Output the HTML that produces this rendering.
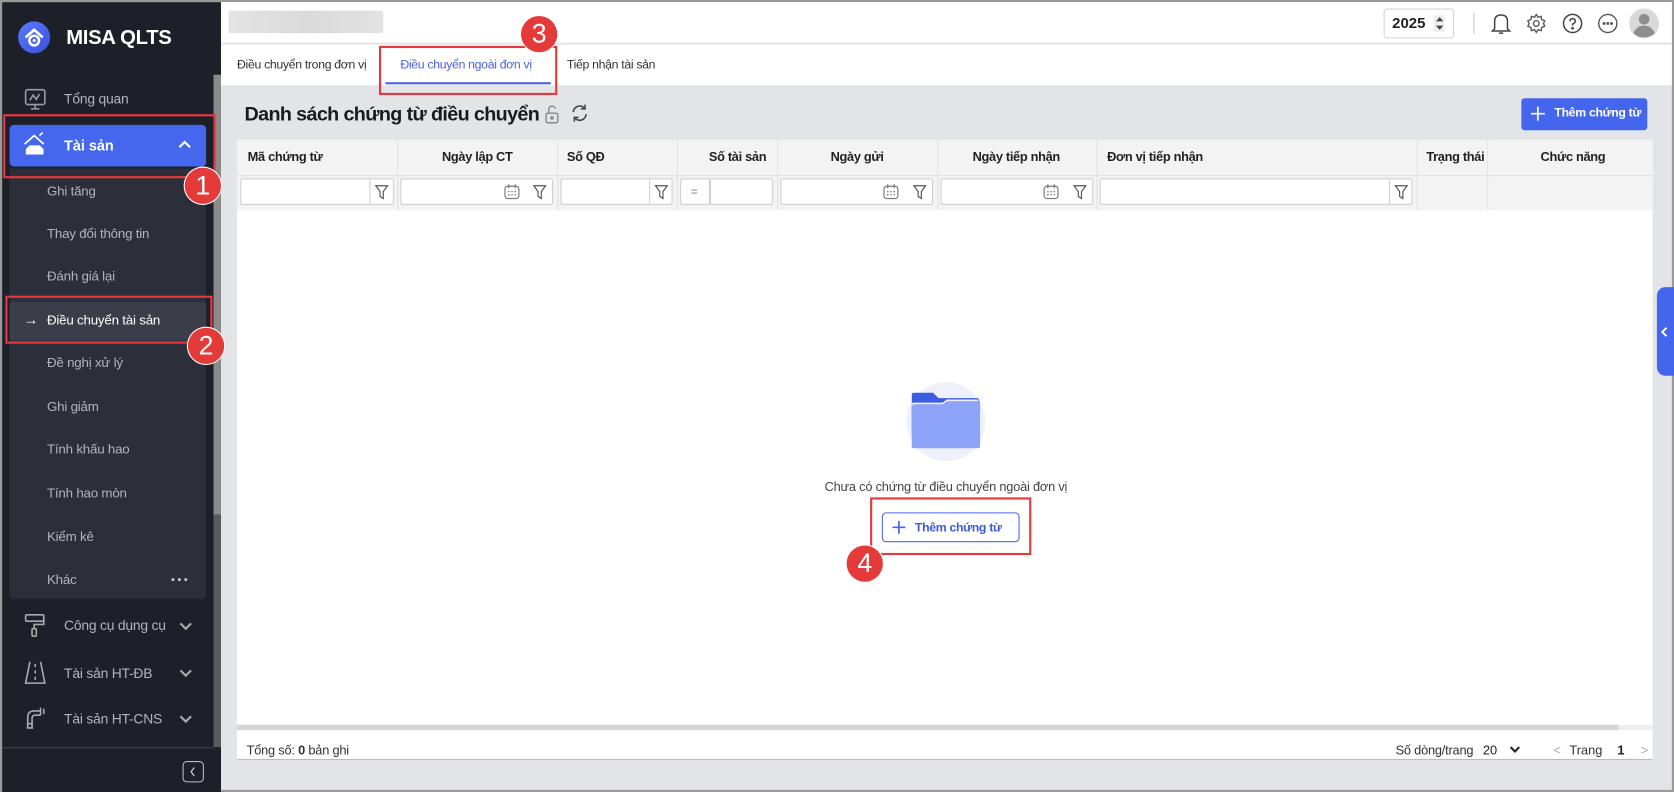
<!DOCTYPE html>
<html><head><meta charset="utf-8"><style>
html,body{margin:0;padding:0;width:1674px;height:792px;overflow:hidden;background:#9a9a9a;}
#w{position:absolute;left:0;top:0;width:1568px;height:742px;transform:scale(1.0676,1.0674);transform-origin:0 0;font-family:"Liberation Sans",Arial,sans-serif;background:#e3e4e8;overflow:hidden;}
.a{position:absolute;white-space:nowrap;}
.sb{left:2px;top:2px;width:205px;height:740px;background:#1e2029;}
.mi{position:absolute;left:60px;color:#b3b4bb;font-size:13px;letter-spacing:-0.2px;}
.si{position:absolute;left:44px;color:#b3b4bb;font-size:12.5px;letter-spacing:-0.2px;}
.red{position:absolute;border:2px solid #e8383d;box-sizing:border-box;}
.num{position:absolute;width:34px;height:34px;border-radius:50%;background:#e53a3a;color:#fff;font-size:25px;text-align:center;line-height:34px;box-shadow:0 0 0 1px #fff;}
.th{position:absolute;top:131px;height:33px;line-height:33px;font-size:12px;font-weight:bold;color:#222;letter-spacing:-0.3px;}
.inp{position:absolute;top:167px;height:25px;background:#fff;border:1px solid #d0d0d0;box-sizing:border-box;border-radius:2px;}
.vl{position:absolute;top:131px;width:1px;height:66px;background:#e2e2e2;}
.cal path{stroke-linecap:round}
</style></head><body><div id="w">
<div class="a" style="left:0;top:0;width:1568px;height:2px;background:#9a9a9a"></div>
<div class="a" style="left:1566px;top:0;width:2px;height:742px;background:#9a9a9a"></div>
<div class="a" style="left:0;top:740px;width:1568px;height:2px;background:#9a9a9a"></div>
<div class="a" style="left:0;top:0;width:2px;height:742px;background:#9a9a9a"></div>

<div class="a sb"></div>
<div class="a" style="left:200px;top:70px;width:7px;height:412px;background:#8a8a8a"></div>
<div class="a" style="left:200px;top:482px;width:7px;height:218px;background:#5a5b5f"></div>
<svg class="a" style="left:16px;top:19px" width="32" height="32" viewBox="0 0 32 32"><defs><linearGradient id="g" x1="0" y1="0" x2="1" y2="1"><stop offset="0" stop-color="#5b7cff"/><stop offset="1" stop-color="#3b4fd8"/></linearGradient></defs><circle cx="16" cy="16" r="15" fill="url(#g)"/><path d="M8 16 L16 9 L24 16" stroke="#fff" stroke-width="2.4" fill="none"/><circle cx="16" cy="19" r="4.5" stroke="#fff" stroke-width="2.4" fill="none"/><circle cx="16" cy="19" r="1.5" fill="#fff"/></svg>
<div class="a" style="left:62px;top:25px;color:#fff;font-size:19px;font-weight:bold;letter-spacing:-0.3px">MISA QLTS</div>

<svg class="a" style="left:22px;top:82px" width="22" height="22" viewBox="0 0 22 22" fill="none" stroke="#9a9ba3" stroke-width="1.5"><rect x="2" y="2" width="18" height="14" rx="2"/><path d="M6 12 L9 7 L12 11 L15 6 M11 16 V20 M7 20 H15"/></svg>
<div class="mi" style="top:85px">Tổng quan</div>

<div class="a" style="left:9px;top:117px;width:184px;height:39px;background:#4567ee;border-radius:4px"></div>
<svg class="a" style="left:21px;top:124px" width="24" height="24" viewBox="0 0 24 24" fill="none" stroke="#fff" stroke-width="1.6"><path d="M2 11 L11 3 L20 11 M16 3 L19 0"/><path d="M4 20 V16 L7 13 H16 L19 16 V20 Z" fill="#fff"/></svg>
<div class="a" style="left:60px;top:129px;color:#fff;font-size:13.5px;font-weight:bold">Tài sản</div>
<svg class="a" style="left:166px;top:130px" width="14" height="10" viewBox="0 0 14 10"><path d="M2 8 L7 3 L12 8" stroke="#fff" stroke-width="2" fill="none"/></svg>

<div class="a" style="left:9px;top:158px;width:184px;height:403px;background:#2c2e3a;border-radius:0 0 4px 4px"></div>
<div class="si" style="top:172px">Ghi tăng</div>
<div class="si" style="top:212px">Thay đổi thông tin</div>
<div class="si" style="top:252px">Đánh giá lại</div>
<div class="a" style="left:9px;top:283px;width:184px;height:36px;background:#3b3d49;border-radius:3px"></div>
<div class="a" style="left:22px;top:291px;color:#fff;font-size:14px">→</div>
<div class="si" style="top:293px;color:#fff">Điều chuyển tài sản</div>
<div class="si" style="top:333px">Đề nghị xử lý</div>
<div class="si" style="top:374px">Ghi giảm</div>
<div class="si" style="top:414px">Tính khấu hao</div>
<div class="si" style="top:455px">Tính hao mòn</div>
<div class="si" style="top:496px">Kiểm kê</div>
<div class="si" style="top:536px">Khác</div>
<svg class="a" style="left:160px;top:541px" width="16" height="4" viewBox="0 0 16 4"><circle cx="2" cy="2" r="1.4" fill="#ccc"/><circle cx="8" cy="2" r="1.4" fill="#ccc"/><circle cx="14" cy="2" r="1.4" fill="#ccc"/></svg>

<svg class="a" style="left:22px;top:574px" width="22" height="24" viewBox="0 0 22 24" fill="none" stroke="#aaa" stroke-width="1.5"><rect x="2" y="2" width="17" height="6" rx="1"/><path d="M19 5 V11 H10 V15"/><rect x="8" y="15" width="4" height="7" rx="1"/></svg>
<div class="mi" style="top:578px">Công cụ dụng cụ</div>
<svg class="a" style="left:22px;top:618px" width="22" height="24" viewBox="0 0 22 24" fill="none" stroke="#aaa" stroke-width="1.5"><path d="M6 2 L2 22 H20 L16 2 M11 4 V7 M11 10 V13 M11 16 V19"/></svg>
<div class="mi" style="top:623px">Tài sản HT-ĐB</div>
<svg class="a" style="left:22px;top:662px" width="22" height="24" viewBox="0 0 22 24" fill="none" stroke="#aaa" stroke-width="1.5"><path d="M4 20 V10 Q4 4 10 4 H16 M16 1 V8 M19 2 V7 M8 20 V11 Q8 8 11 8 H16 M3 16 H9 M3 20 H9"/></svg>
<div class="mi" style="top:666px">Tài sản HT-CNS</div>
<svg class="a" style="left:167px;top:582px" width="14" height="10" viewBox="0 0 14 10"><path d="M2 2 L7 7 L12 2" stroke="#aaa" stroke-width="2" fill="none"/></svg>
<svg class="a" style="left:167px;top:626px" width="14" height="10" viewBox="0 0 14 10"><path d="M2 2 L7 7 L12 2" stroke="#aaa" stroke-width="2" fill="none"/></svg>
<svg class="a" style="left:167px;top:669px" width="14" height="10" viewBox="0 0 14 10"><path d="M2 2 L7 7 L12 2" stroke="#aaa" stroke-width="2" fill="none"/></svg>
<div class="a" style="left:2px;top:700px;width:198px;height:1px;background:#444"></div>
<div class="a" style="left:171px;top:713px;width:18px;height:18px;border:1px solid #bbb;border-radius:4px"></div>
<svg class="a" style="left:176px;top:717px" width="10" height="12" viewBox="0 0 10 12"><path d="M6 2 L3 6 L6 10" stroke="#ccc" stroke-width="1.2" fill="none"/></svg>

<div class="a" style="left:207px;top:2px;width:1359px;height:38px;background:#fff"></div>
<div class="a" style="left:207px;top:40px;width:1359px;height:2px;background:#e8e8e8"></div>
<div class="a" style="left:214px;top:10px;width:145px;height:21px;background:linear-gradient(90deg,#e4e4e4,#dadada,#e2e2e2);border-radius:2px"></div>
<div class="a" style="left:1296px;top:8px;width:66px;height:28px;border:1px solid #d5d5d5;border-radius:3px;box-sizing:border-box"></div>
<div class="a" style="left:1304px;top:13px;font-size:14px;font-weight:bold;color:#222">2025</div>
<div class="a" style="left:1343px;top:14px;width:10px;height:16px;background:#eee"></div>
<svg class="a" style="left:1344px;top:15px" width="9" height="14" viewBox="0 0 9 14"><path d="M1 5 L4.5 1 L8 5Z M1 9 L4.5 13 L8 9Z" fill="#444"/></svg>
<div class="a" style="left:1380px;top:12px;width:1px;height:20px;background:#ccc"></div>
<svg class="a" style="left:1396px;top:10px" width="20" height="24" viewBox="0 0 20 24" fill="none" stroke="#444" stroke-width="1.4"><path d="M4 17 V10 Q4 4 10 4 Q16 4 16 10 V17 L18 19 H2 Z M8 21 H12"/></svg>
<svg class="a" style="left:1429px;top:12px" width="20" height="20" viewBox="0 0 24 24" fill="none" stroke="#555" stroke-width="1.5"><circle cx="12" cy="12" r="3.2"/><path d="M12 2 L14 5 L17.5 4 L18 7.5 L21.5 9 L20 12 L21.5 15 L18 16.5 L17.5 20 L14 19 L12 22 L10 19 L6.5 20 L6 16.5 L2.5 15 L4 12 L2.5 9 L6 7.5 L6.5 4 L10 5 Z"/></svg>
<svg class="a" style="left:1463px;top:12px" width="20" height="20" viewBox="0 0 20 20" fill="none" stroke="#444" stroke-width="1.4"><circle cx="10" cy="10" r="8.5"/><path d="M7.5 8 Q7.5 5.5 10 5.5 Q12.5 5.5 12.5 8 Q12.5 9.5 10 10.5 V12"/><circle cx="10" cy="14.5" r=".6" fill="#444"/></svg>
<svg class="a" style="left:1496px;top:12px" width="20" height="20" viewBox="0 0 20 20" fill="none" stroke="#555" stroke-width="1.3"><circle cx="10" cy="10" r="8.5"/><circle cx="6.5" cy="10" r=".7" fill="#555"/><circle cx="10" cy="10" r=".7" fill="#555"/><circle cx="13.5" cy="10" r=".7" fill="#555"/></svg>
<svg class="a" style="left:1526px;top:8px" width="28" height="28" viewBox="0 0 28 28"><circle cx="14" cy="14" r="14" fill="#d9d9d9"/><circle cx="14" cy="10" r="5" fill="#8e8e8e"/><path d="M4 23 Q7 16 14 16 Q21 16 24 23 Q20 27 14 27 Q8 27 4 23Z" fill="#8e8e8e"/></svg>

<div class="a" style="left:207px;top:42px;width:1359px;height:38px;background:#fff"></div>
<div class="a" style="left:222px;top:55px;font-size:11.5px;color:#333;letter-spacing:-0.3px">Điều chuyển trong đơn vị</div>
<div class="a" style="left:375px;top:55px;font-size:11.5px;color:#4a5ee6;letter-spacing:-0.3px">Điều chuyển ngoài đơn vị</div>
<div class="a" style="left:361px;top:77px;width:155px;height:2px;background:#4a63ee"></div>
<div class="a" style="left:531px;top:55px;font-size:11.5px;color:#333;letter-spacing:-0.3px">Tiếp nhận tài sản</div>

<div class="a" style="left:229px;top:96px;font-size:18.5px;font-weight:bold;color:#1a1a1a;letter-spacing:-0.6px">Danh sách chứng từ điều chuyển</div>
<svg class="a" style="left:510px;top:98px" width="14" height="18" viewBox="0 0 14 18" fill="none" stroke="#888" stroke-width="1.3"><rect x="1.5" y="8" width="11" height="9" rx="1.5"/><path d="M4 8 V5 Q4 1.5 7 1.5 Q10 1.5 10 4"/><circle cx="7" cy="12.5" r="1" fill="#888"/></svg>
<svg class="a" style="left:534px;top:97px" width="18" height="18" viewBox="0 0 18 18" fill="none" stroke="#444" stroke-width="1.5"><path d="M3 8 A6 6 0 0 1 14 5 M15 10 A6 6 0 0 1 4 13"/><path d="M14 1 V5 H10 M4 17 V13 H8"/></svg>
<div class="a" style="left:1425px;top:92px;width:118px;height:30px;background:#4466ee;border-radius:3px"></div>
<svg class="a" style="left:1433px;top:99px" width="15" height="15" viewBox="0 0 15 15"><path d="M7.5 1 V14 M1 7.5 H14" stroke="#fff" stroke-width="1.6"/></svg>
<div class="a" style="left:1456px;top:100px;font-size:11.5px;font-weight:bold;color:#fff;letter-spacing:-0.3px">Thêm chứng từ</div>

<div class="a" style="left:222px;top:131px;width:1326px;height:581px;background:#fff"></div>
<div class="a" style="left:222px;top:131px;width:1326px;height:66px;background:#f3f3f3"></div>
<div class="a" style="left:222px;top:164px;width:1326px;height:1px;background:#e2e2e2"></div>
<div class="vl" style="left:372px"></div><div class="vl" style="left:522px"></div><div class="vl" style="left:634px"></div><div class="vl" style="left:728px"></div><div class="vl" style="left:878px"></div><div class="vl" style="left:1027px"></div><div class="vl" style="left:1327px"></div><div class="vl" style="left:1393px"></div>
<div class="th" style="left:232px">Mã chứng từ</div>
<div class="th" style="left:414px">Ngày lập CT</div>
<div class="th" style="left:531px">Số QĐ</div>
<div class="th" style="left:664px">Số tài sản</div>
<div class="th" style="left:778px">Ngày gửi</div>
<div class="th" style="left:911px">Ngày tiếp nhận</div>
<div class="th" style="left:1037px">Đơn vị tiếp nhận</div>
<div class="th" style="left:1336px">Trạng thái</div>
<div class="th" style="left:1443px">Chức năng</div>

<div class="inp" style="left:225px;width:144px"></div><div class="a" style="left:346px;top:168px;width:1px;height:23px;background:#d0d0d0"></div>
<div class="inp" style="left:375px;width:143px"></div>
<div class="inp" style="left:525px;width:105px"></div><div class="a" style="left:608px;top:168px;width:1px;height:23px;background:#d0d0d0"></div>
<div class="inp" style="left:637px;width:28px;border-radius:2px 0 0 2px"></div><div class="inp" style="left:665px;width:59px"></div>
<div class="a" style="left:647px;top:174px;font-size:11px;color:#777">=</div>
<div class="inp" style="left:731px;width:143px"></div>
<div class="inp" style="left:881px;width:143px"></div>
<div class="inp" style="left:1030px;width:293px"></div><div class="a" style="left:1301px;top:168px;width:1px;height:23px;background:#d0d0d0"></div>
<svg class="a" style="left:351px;top:173px" width="13" height="14" viewBox="0 0 13 14"><path d="M1 1 H12 L8 6.5 V13 L5 11 V6.5 Z" fill="none" stroke="#555" stroke-width="1.1"/></svg>
<svg class="a" style="left:499px;top:173px" width="13" height="14" viewBox="0 0 13 14"><path d="M1 1 H12 L8 6.5 V13 L5 11 V6.5 Z" fill="none" stroke="#555" stroke-width="1.1"/></svg>
<svg class="a" style="left:613px;top:173px" width="13" height="14" viewBox="0 0 13 14"><path d="M1 1 H12 L8 6.5 V13 L5 11 V6.5 Z" fill="none" stroke="#555" stroke-width="1.1"/></svg>
<svg class="a" style="left:855px;top:173px" width="13" height="14" viewBox="0 0 13 14"><path d="M1 1 H12 L8 6.5 V13 L5 11 V6.5 Z" fill="none" stroke="#555" stroke-width="1.1"/></svg>
<svg class="a" style="left:1005px;top:173px" width="13" height="14" viewBox="0 0 13 14"><path d="M1 1 H12 L8 6.5 V13 L5 11 V6.5 Z" fill="none" stroke="#555" stroke-width="1.1"/></svg>
<svg class="a" style="left:1306px;top:173px" width="13" height="14" viewBox="0 0 13 14"><path d="M1 1 H12 L8 6.5 V13 L5 11 V6.5 Z" fill="none" stroke="#555" stroke-width="1.1"/></svg>
<svg class="a cal" style="left:472px;top:172px" width="15" height="15" viewBox="0 0 15 15" fill="none" stroke="#777" stroke-width="1.1"><rect x="1" y="2.5" width="13" height="11.5" rx="2.5"/><path d="M4.5 1 V4 M10.5 1 V4"/><path d="M4.5 7.5h.1M7.5 7.5h.1M10.5 7.5h.1M4.5 10.5h.1M7.5 10.5h.1M10.5 10.5h.1" stroke-width="1.4"/></svg>
<svg class="a cal" style="left:827px;top:172px" width="15" height="15" viewBox="0 0 15 15" fill="none" stroke="#777" stroke-width="1.1"><rect x="1" y="2.5" width="13" height="11.5" rx="2.5"/><path d="M4.5 1 V4 M10.5 1 V4"/><path d="M4.5 7.5h.1M7.5 7.5h.1M10.5 7.5h.1M4.5 10.5h.1M7.5 10.5h.1M10.5 10.5h.1" stroke-width="1.4"/></svg>
<svg class="a cal" style="left:977px;top:172px" width="15" height="15" viewBox="0 0 15 15" fill="none" stroke="#777" stroke-width="1.1"><rect x="1" y="2.5" width="13" height="11.5" rx="2.5"/><path d="M4.5 1 V4 M10.5 1 V4"/><path d="M4.5 7.5h.1M7.5 7.5h.1M10.5 7.5h.1M4.5 10.5h.1M7.5 10.5h.1M10.5 10.5h.1" stroke-width="1.4"/></svg>

<div class="a" style="left:849px;top:358px;width:74px;height:74px;border-radius:50%;background:#eef1fb"></div>
<svg class="a" style="left:851px;top:366px" width="70" height="56" viewBox="0 0 70 56"><path d="M3 4 Q3 2 5 2 H23 L28 7 H64 Q66 7 66 9 V40 H3 Z" fill="#3d5ce0"/><path d="M3 14 Q3 12 5 12 H32 L36 9 H65 Q67 9 67 11 V52 Q67 54 65 54 H5 Q3 54 3 52 Z" fill="#8da3f7"/><path d="M3 14 Q3 12 5 12 H32 L36 9 H65" stroke="#eef1fb" stroke-width="1.5" fill="none"/></svg>
<div class="a" style="left:686px;top:449px;width:400px;text-align:center;font-size:12px;color:#444;letter-spacing:-0.2px">Chưa có chứng từ điều chuyển ngoài đơn vị</div>
<div class="a" style="left:826px;top:480px;width:129px;height:28px;border:1px solid #4a63e6;border-radius:4px;box-sizing:border-box;background:#fff"></div>
<svg class="a" style="left:835px;top:487px" width="14" height="14" viewBox="0 0 14 14"><path d="M7 1 V13 M1 7 H13" stroke="#4a63e6" stroke-width="1.6"/></svg>
<div class="a" style="left:857px;top:489px;font-size:11.5px;font-weight:bold;color:#3f57dc;letter-spacing:-0.3px">Thêm chứng từ</div>

<div class="a" style="left:222px;top:679px;width:1326px;height:5px;background:#eeeeee"></div>
<div class="a" style="left:222px;top:679px;width:1294px;height:5px;background:#d4d4d4"></div>
<div class="a" style="left:222px;top:711px;width:1326px;height:1px;background:#bbb"></div>
<div class="a" style="left:231px;top:696px;font-size:12px;color:#333;letter-spacing:-0.2px">Tổng số: <b>0</b> bản ghi</div>
<div class="a" style="left:1280px;top:696px;width:100px;text-align:right;font-size:12px;color:#333;letter-spacing:-0.2px">Số dòng/trang</div>
<div class="a" style="left:1389px;top:696px;font-size:12px;color:#222">20</div>
<svg class="a" style="left:1413px;top:698px" width="12" height="9" viewBox="0 0 12 9"><path d="M2 2 L6 6 L10 2" stroke="#222" stroke-width="2" fill="none"/></svg>
<div class="a" style="left:1455px;top:696px;font-size:12px;color:#aaa">&lt;</div>
<div class="a" style="left:1470px;top:696px;font-size:12px;color:#333">Trang</div>
<div class="a" style="left:1515px;top:696px;font-size:12px;font-weight:bold;color:#222">1</div>
<div class="a" style="left:1537px;top:696px;font-size:12px;color:#aaa">&gt;</div>

<div class="a" style="left:1552px;top:269px;width:16px;height:83px;background:#4466ee;border-radius:8px 0 0 8px"></div>
<svg class="a" style="left:1555px;top:305px" width="8" height="12" viewBox="0 0 8 12"><path d="M6 2 L2 6 L6 10" stroke="#fff" stroke-width="1.8" fill="none"/></svg>

<div class="red" style="left:3px;top:107px;width:199px;height:60px"></div>
<div class="num" style="left:173px;top:157px">1</div>
<div class="red" style="left:5px;top:277px;width:194px;height:45px"></div>
<div class="num" style="left:176px;top:307px">2</div>
<div class="red" style="left:355px;top:43px;width:167px;height:46px"></div>
<div class="num" style="left:488px;top:15px">3</div>
<div class="red" style="left:815px;top:466px;width:151px;height:54px"></div>
<div class="num" style="left:793px;top:511px">4</div>
</div></body></html>
